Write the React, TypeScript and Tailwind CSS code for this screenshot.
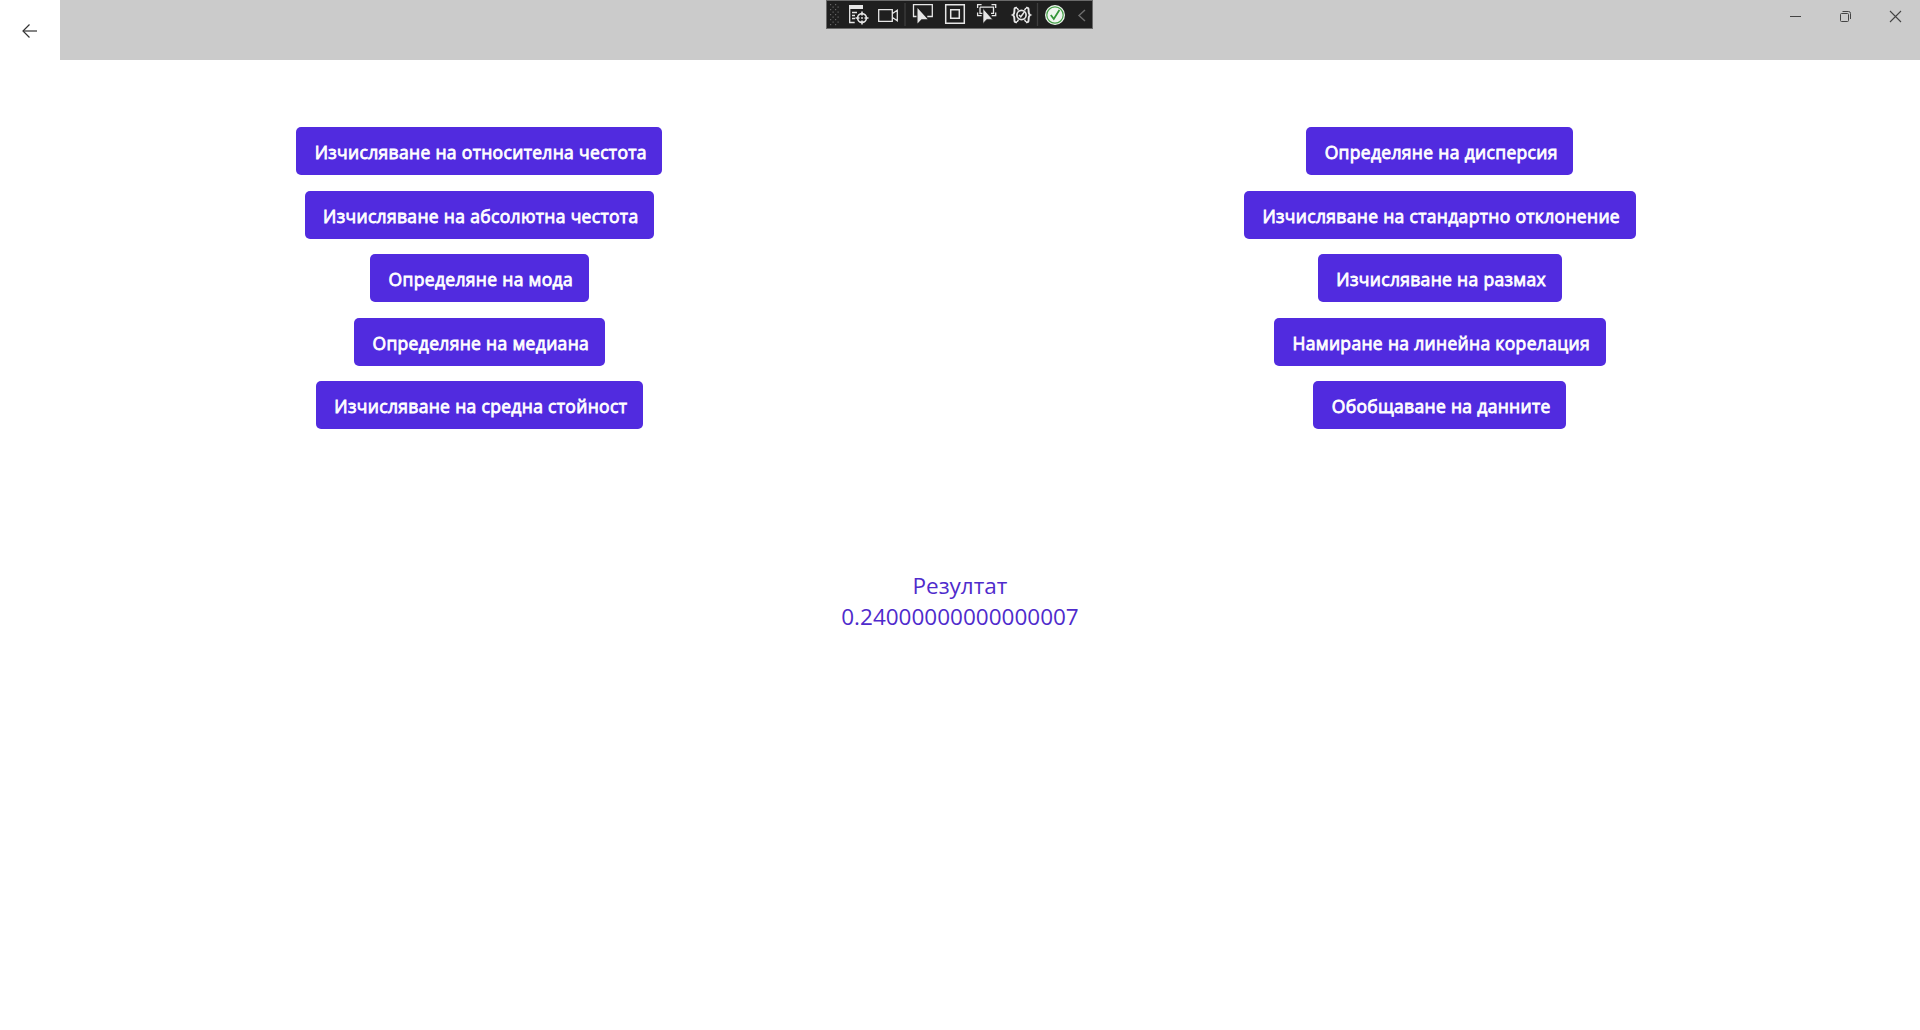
import type { ReactNode } from "react";

const leftActions = [
  { label: "Изчисляване на относителна честота", width: "w-[366px]" },
  { label: "Изчисляване на абсолютна честота", width: "w-[349px]" },
  { label: "Определяне на мода", width: "w-[219px]" },
  { label: "Определяне на медиана", width: "w-[251px]" },
  { label: "Изчисляване на средна стойност", width: "w-[327px]" },
];

const rightActions = [
  { label: "Определяне на дисперсия", width: "w-[267px]" },
  { label: "Изчисляване на стандартно отклонение", width: "w-[392px]" },
  { label: "Изчисляване на размах", width: "w-[244px]" },
  { label: "Намиране на линейна корелация", width: "w-[332px]" },
  { label: "Обобщаване на данните", width: "w-[253px]" },
];

function ActionColumn({ items }: { items: { label: string; width: string }[] }) {
  return (
    <div className="flex w-[958.6px] flex-col items-center gap-[15.5px]">
      {items.map((item) => (
        <button
          key={item.label}
          className={`${item.width} flex h-12 items-center justify-center whitespace-nowrap rounded-[5px] bg-[#512bdf] pt-[2px] pl-[3px] text-[17.5px] leading-6 font-normal tracking-[0.33px] text-white [-webkit-text-stroke:0.8px_white]`}
        >
          {item.label}
        </button>
      ))}
    </div>
  );
}

function Tool({ x, w, children }: { x: number; w: number; children: ReactNode }) {
  return (
    <svg
      width={w}
      height={27}
      viewBox={`${x} 1 ${w} 27`}
      fill="none"
      stroke="#e6e6e6"
      strokeWidth="1.3"
      className="shrink-0"
    >
      {children}
    </svg>
  );
}

const gripDots = Array.from({ length: 18 }, (_, i) => ({
  x: 830 + (i % 2) * 5 + (Math.floor(i / 2) % 2) * 2.5,
  y: 4 + Math.floor(i / 2) * 2.5,
}));

function DebugToolbar() {
  return (
    <div className="flex h-[29px] w-[267px] border border-[#6a6a6a] bg-[#1f1f1f]">
      <Tool x={827} w={19}>
        {gripDots.map((d) => (
          <rect key={`${d.x}-${d.y}`} x={d.x} y={d.y} width="1.2" height="1.2" fill="#666" stroke="none" />
        ))}
      </Tool>
      <Tool x={846} w={26}>
        <path d="M849 5h14v4h-14z" fill="#e6e6e6" stroke="none" />
        <path d="M849.7 8v14.5h5M852 12.5h5M852 15.5h3M852 18.5h3" />
        <circle cx="862" cy="18" r="4.4" strokeWidth="1.6" />
        <path d="M862 11.5v4M862 20.5v4M855.5 18h4M864.5 18h4" strokeWidth="1.6" />
        <circle cx="862" cy="18" r="0.9" fill="#e6e6e6" stroke="none" />
      </Tool>
      <Tool x={872} w={38}>
        <path d="M878.7 9.7h13.6v11.6h-13.6zM892.5 13.5l4.8-3.3v10.6l-4.8-3.3" />
        <path d="M905 3v23" stroke="#3d3d3d" />
      </Tool>
      <Tool x={910} w={32}>
        <path d="M916.5 16.5h-3V4.6h18.8v11.9h-5" />
        <path d="M917.5 8v15.5l4-4.2h6.2z" fill="#e6e6e6" stroke="none" />
      </Tool>
      <Tool x={942} w={30}>
        <path d="M945.7 4.7h18.6v18.6h-18.6zM950.7 9.7h8.6v8.6h-8.6z" strokeWidth="1.5" />
      </Tool>
      <Tool x={972} w={32}>
        <path d="M977.6 8V4.7h4M991.5 4.7h4.2V8M977.6 12.5v3.2h4M995.7 12.5v3.2h-4M980 7.2h13.5v6.2h-2.5M980 7.2v6.2h2.5" />
        <path d="M983 8.5v15l3.8-4.1h5.8z" fill="#e6e6e6" stroke="#1f1f1f" strokeWidth="0.6" />
      </Tool>
      <Tool x={1004} w={38}>
        <path d="M1017 7.7c-2.7-.2-2.6 1-2.6 3 0 2.5-.2 3.6-1.6 4.3 1.4.7 1.6 1.8 1.6 4.3 0 2-.1 3.2 2.6 3M1026 7.7c2.7-.2 2.6 1 2.6 3 0 2.5.2 3.6 1.6 4.3-1.4.7-1.6 1.8-1.6 4.3 0 2 .1 3.2-2.6 3" strokeWidth="1.9" />
        <circle cx="1021.5" cy="15" r="4.6" strokeWidth="1.7" />
        <path d="M1019 15l1.8 1.8 3.8-5.2" strokeWidth="1.5" />
        <path d="M1018.5 10.5l-1.3-2.5M1024.5 10.5l1.3-2.5M1018.5 19.5l-1.3 2.5M1024.5 19.5l1.3 2.5" strokeWidth="1.5" />
        <path d="M1037.5 3v23" stroke="#3d3d3d" />
      </Tool>
      <Tool x={1042} w={28}>
        <circle cx="1055" cy="15" r="10" fill="#eef5ee" stroke="none" />
        <circle cx="1055" cy="15" r="8.2" stroke="#48a24b" strokeWidth="1.2" />
        <path d="M1050.8 15l3 4 5.6-9" stroke="#359539" strokeWidth="1.8" />
      </Tool>
      <Tool x={1070} w={22}>
        <path d="M1085 10l-6 5.5 6 5.5" stroke="#6e6e6e" strokeWidth="1.4" />
      </Tool>
    </div>
  );
}

function WindowControls() {
  return (
    <div className="flex w-[150px] text-[#444]">
      <svg width="50" height="33" fill="none" stroke="currentColor">
        <path d="M20 16.5h11" />
      </svg>
      <svg width="50" height="33" fill="none" stroke="currentColor">
        <rect x="20.5" y="13.5" width="8" height="8" rx="1" />
        <path d="M22.5 11.5h6a2 2 0 0 1 2 2v5.5" />
      </svg>
      <svg width="50" height="33" fill="none" stroke="currentColor">
        <path d="M20 11l11 11M31 11L20 22" strokeWidth="1.1" />
      </svg>
    </div>
  );
}

export default function App() {
  return (
    <div className="flex h-[1030px] w-[1920px] flex-col overflow-hidden bg-white font-['Open_Sans','Noto_Sans',sans-serif]">
      <header className="flex h-[60px] shrink-0">
        <button aria-label="Назад" className="h-[60px] w-[60px] shrink-0 bg-white">
          <svg width="60" height="60" fill="none" stroke="#333">
            <path d="M23.5 31H37" stroke="#777" strokeWidth="1.8" />
            <path d="M29.5 24.5L23 31l6.5 6.5" strokeWidth="1.2" />
          </svg>
        </button>
        <div className="flex flex-1 items-start bg-[#cbcbcb]">
          <div className="w-[766px]" />
          <DebugToolbar />
          <div className="flex-1" />
          <WindowControls />
        </div>
      </header>
      <main className="flex flex-col pt-[67px]">
        <div className="flex justify-between pr-px">
          <ActionColumn items={leftActions} />
          <ActionColumn items={rightActions} />
        </div>
        <div className="mt-[141px] flex flex-col items-center text-[22.5px] leading-[31px] text-[#4f2bcc]">
          <p>Резултат</p>
          <p>0.24000000000000007</p>
        </div>
      </main>
    </div>
  );
}
